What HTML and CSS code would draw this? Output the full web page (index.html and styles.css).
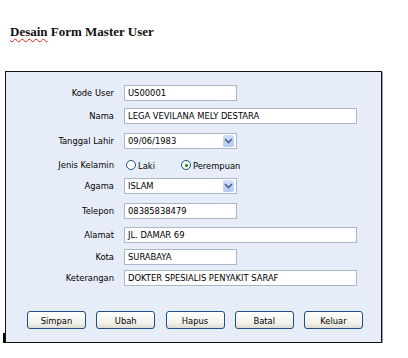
FILE: index.html
```html
<!DOCTYPE html>
<html lang="id">
<head>
  <meta charset="UTF-8" />
  <meta name="viewport" content="width=device-width, initial-scale=1" />
  <title>Desain Form Master User</title>
  <link rel="stylesheet" href="styles.css">
</head>
<body>
  <h1 class="page-title"><span class="typo">Desain</span> Form Master User</h1>

  <div class="sheet">
    <span class="caret"></span>
    <form class="form-panel" id="userForm">
      <div class="fields">
        <label class="lbl" for="kode">Kode User</label>
        <div class="box short" id="kode">US00001</div>

        <label class="lbl" for="nama">Nama</label>
        <div class="box long" id="nama">LEGA VEVILANA MELY DESTARA</div>

        <label class="lbl" for="tgl">Tanggal Lahir</label>
        <div class="box short combo" id="tgl">
          <span>09/06/1983</span>
          <span class="arrow"><svg width="9" height="6" viewBox="0 0 9 6"><path d="M1 1 L4.5 4.5 L8 1" fill="none" stroke="#4d6185" stroke-width="1.6"/></svg></span>
        </div>

        <label class="lbl">Jenis Kelamin</label>
        <div class="radios">
          <span class="radio"><span class="dot"></span>Laki</span>
          <span class="radio checked"><span class="dot"></span>Perempuan</span>
        </div>

        <label class="lbl" for="agama">Agama</label>
        <div class="box short combo" id="agama">
          <span>ISLAM</span>
          <span class="arrow"><svg width="9" height="6" viewBox="0 0 9 6"><path d="M1 1 L4.5 4.5 L8 1" fill="none" stroke="#4d6185" stroke-width="1.6"/></svg></span>
        </div>

        <label class="lbl" for="telp">Telepon</label>
        <div class="box short" id="telp">08385838479</div>

        <label class="lbl" for="alamat">Alamat</label>
        <div class="box long" id="alamat">JL. DAMAR 69</div>

        <label class="lbl" for="kota">Kota</label>
        <div class="box short" id="kota">SURABAYA</div>

        <label class="lbl" for="ket">Keterangan</label>
        <div class="box long" id="ket">DOKTER SPESIALIS PENYAKIT SARAF</div>
      </div>

      <div class="actions">
        <button type="button" class="btn">Simpan</button>
        <button type="button" class="btn">Ubah</button>
        <button type="button" class="btn">Hapus</button>
        <button type="button" class="btn">Batal</button>
        <button type="button" class="btn">Keluar</button>
      </div>
    </form>
  </div>
</body>
</html>
```

FILE: styles.css
```css
body {
  margin: 0;
  background: #fff;
  font-family: "DejaVu Sans Condensed", "DejaVu Sans", sans-serif;
  font-stretch: condensed;
  color: #000;
}

.page-title {
  margin: 0;
  padding: 24px 0 0 10px;
  height: 15px;
  font-family: "Liberation Serif", serif;
  font-size: 13px;
  line-height: 15px;
  font-weight: bold;
  color: #111;
}

.typo {
  text-decoration: underline wavy #e02020;
  text-decoration-thickness: 1px;
  text-underline-offset: 2px;
}

.sheet {
  margin-top: 32px;
  padding-left: 3px;
  display: flex;
  align-items: flex-end;
}

.caret {
  width: 2px;
  height: 12px;
  margin-bottom: -2px;
  background: #000;
}

.form-panel {
  width: 375px;
  height: 270px;
  padding: 0;
  background: #e6edf8;
  border: 1px solid #111;
  box-shadow: 1px 1px 0 #9aa0a8;
  box-sizing: content-box;
}

.fields {
  display: grid;
  grid-template-columns: 108px 1fr;
  grid-template-rows: 23px 25px 24px 21px 25px 24px 22px 21px 16px;
  column-gap: 10px;
  padding-top: 13px;
  font-size: 9.3px;
}

.lbl {
  text-align: right;
  line-height: 16px;
  align-self: start;
}

.box {
  height: 16px;
  box-sizing: border-box;
  background: #fff;
  border: 1px solid #a9b7c9;
  padding: 0 3px;
  line-height: 14px;
  white-space: nowrap;
  align-self: start;
}

.short { width: 113px; }
.long { width: 233px; }

.combo {
  display: flex;
  justify-content: space-between;
  align-items: center;
  padding-right: 2px;
}

.arrow {
  width: 11px;
  height: 12px;
  display: flex;
  align-items: center;
  justify-content: center;
  background: linear-gradient(#d3e0fd, #b4c9f6);
  border-radius: 2px;
}

.radios {
  display: flex;
  align-items: center;
  gap: 26px;
  height: 16px;
  padding-left: 2px;
}

.radio {
  display: flex;
  align-items: center;
  gap: 2px;
}

.dot {
  width: 10px;
  height: 10px;
  box-sizing: border-box;
  border: 1px solid #1c5180;
  border-radius: 50%;
  background: #fff;
  position: relative;
}

.checked .dot::after {
  content: "";
  position: absolute;
  left: 3px;
  top: 3px;
  width: 3px;
  height: 3px;
  background: #21a121;
  border-radius: 1px;
}

.actions {
  display: flex;
  gap: 10.25px;
  padding: 25px 0 0 21px;
}

.btn {
  width: 59px;
  height: 18px;
  padding: 0;
  border: 1px solid #1f4e82;
  border-radius: 3px;
  background: linear-gradient(#ffffff, #f2f1ea 70%, #dedcd2);
  font-family: inherit;
  font-stretch: condensed;
  font-size: 9.3px;
  color: #000;
}
```
